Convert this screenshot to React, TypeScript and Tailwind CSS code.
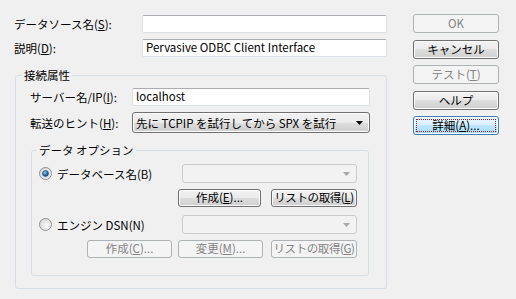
import React from "react";

type Variant = "normal" | "disabled" | "default";

const btnStyles: Record<Variant, string> = {
  normal:
    "border-[#707070] bg-[linear-gradient(#f2f2f2_0%,#ebebeb_50%,#dddddd_50%,#cfcfcf_100%)] shadow-[inset_0_0_0_1px_#fcfcfc] text-black",
  disabled: "border-[#adb2b5] bg-[#f4f4f4] text-[#838383]",
  default:
    "border-[#3c7fb1] bg-[linear-gradient(#eaf6fd_0%,#d9f0fc_50%,#bee6fd_50%,#a7d9f5_100%)] shadow-[inset_0_0_0_1px_#fcfcfc] text-black",
};

function Btn({
  children,
  variant = "normal",
  className = "",
  focused = false,
}: {
  children: React.ReactNode;
  variant?: Variant;
  className?: string;
  focused?: boolean;
}) {
  return (
    <div
      className={`relative flex shrink-0 items-center justify-center whitespace-nowrap rounded-[3px] border leading-none ${btnStyles[variant]} ${className}`}
    >
      {focused && (
        <div className="absolute inset-[2px] border border-dotted border-[#8a2020]" />
      )}
      <span className="relative">{children}</span>
    </div>
  );
}

function TextBox({ value = "", className = "" }: { value?: string; className?: string }) {
  return (
    <div
      className={`flex h-[18px] items-center rounded-[2px] border border-[#dbdfe6] border-t-[#abadb3] bg-white pl-[3px] leading-none ${className}`}
    >
      {value}
    </div>
  );
}

function Arrow({ color }: { color: string }) {
  return (
    <svg width="7" height="4" viewBox="0 0 7 4" className="shrink-0">
      <path d="M0 0H7L3.5 4Z" fill={color} />
    </svg>
  );
}

function DisabledCombo({ className = "" }: { className?: string }) {
  return (
    <div
      className={`flex h-[19px] shrink-0 items-center justify-end rounded-[3px] border border-[#c9cccf] bg-[#f2f2f2] pr-[6px] ${className}`}
    >
      <Arrow color="#a8a8a8" />
    </div>
  );
}

function Radio({ checked }: { checked?: boolean }) {
  return (
    <svg width="13" height="13" viewBox="0 0 13 13" className="shrink-0">
      <defs>
        <radialGradient id="rfill" cx="0.65" cy="0.65" r="0.7">
          <stop offset="0" stopColor="#ffffff" />
          <stop offset="1" stopColor="#d7d7d7" />
        </radialGradient>
        <radialGradient id="rdot" cx="0.4" cy="0.35" r="0.7">
          <stop offset="0" stopColor="#8fd2f5" />
          <stop offset="0.55" stopColor="#2c6fae" />
          <stop offset="1" stopColor="#193f6e" />
        </radialGradient>
      </defs>
      <circle cx="6.5" cy="6.5" r="6" fill="url(#rfill)" stroke="#8e8f8f" />
      <circle cx="6.5" cy="6.5" r="4.2" fill="none" stroke="#e2e2e2" />
      {checked && <circle cx="6.5" cy="6.5" r="3" fill="url(#rdot)" stroke="#1c4a7a" strokeWidth="0.6" />}
    </svg>
  );
}

export default function App() {
  return (
    <div className="flex h-[299px] w-[516px] bg-[#f0f0f0] font-['Noto_Sans_CJK_JP',sans-serif] text-[11.5px] leading-[14px] text-black">
      {/* left side */}
      <div className="flex w-[387px] shrink-0 flex-col pl-[14px] pt-[15px]">
        <div className="flex h-[18px] items-center">
          <span className="w-[128px] shrink-0">
            データソース名(<u>S</u>):
          </span>
          <TextBox className="w-[245px]" />
        </div>
        <div className="mt-[6px] flex h-[18px] items-center">
          <span className="w-[128px] shrink-0">
            説明(<u>D</u>):
          </span>
          <TextBox className="w-[245px]" value="Pervasive ODBC Client Interface" />
        </div>

        <fieldset className="ml-[1px] mt-[11px] h-[221px] w-[372px] rounded-[3px] border border-[#d5dfe5]">
          <legend className="ml-[6px] px-[2px] leading-[14px]">接続属性</legend>
          <div className="flex flex-col pl-[14px] pt-[6px]">
            <div className="flex h-[18px] items-center">
              <span className="w-[102px] shrink-0 whitespace-nowrap">
                サーバー名/IP(<u>I</u>):
              </span>
              <TextBox className="w-[238px]" value="localhost" />
            </div>
            <div className="mt-[6px] flex h-[21px] items-center">
              <span className="w-[102px] shrink-0 whitespace-nowrap">
                転送のヒント(<u>H</u>):
              </span>
              <div className="flex h-[21px] w-[238px] items-center justify-between whitespace-nowrap rounded-[3px] border border-[#707070] bg-[linear-gradient(#f2f2f2_0%,#ebebeb_50%,#dddddd_50%,#cfcfcf_100%)] pl-[3px] pr-[6px] shadow-[inset_0_0_0_1px_#fcfcfc]">
                <span>先に TCPIP を試行してから SPX を試行</span>
                <Arrow color="#000" />
              </div>
            </div>

            <fieldset className="ml-[1px] mt-[10px] h-[133px] w-[338px] rounded-[3px] border border-[#d5dfe5]">
              <legend className="ml-[5px] px-[2px] leading-[14px]">データ オプション</legend>
              <div className="flex flex-col pl-[7px] pt-[7px]">
                <div className="flex h-[19px] items-center">
                  <div className="flex w-[143px] shrink-0 items-center">
                    <Radio checked />
                    <span className="ml-[5px]">データベース名(B)</span>
                  </div>
                  <DisabledCombo className="w-[175px]" />
                </div>
                <div className="ml-[139px] mt-[6px] flex">
                  <Btn className="h-[18px] w-[83px]">
                    作成(<u>E</u>)...
                  </Btn>
                  <Btn className="ml-[10px] h-[18px] w-[86px] tracking-[-0.4px]">
                    リストの取得(<u>L</u>)
                  </Btn>
                </div>
                <div className="mt-[8px] flex h-[19px] items-center">
                  <div className="flex w-[143px] shrink-0 items-center">
                    <Radio />
                    <span className="ml-[5px]">エンジン DSN(N)</span>
                  </div>
                  <DisabledCombo className="w-[175px]" />
                </div>
                <div className="ml-[48px] mt-[6px] flex">
                  <Btn variant="disabled" className="h-[18px] w-[85px]">
                    作成(<u>C</u>)...
                  </Btn>
                  <Btn variant="disabled" className="ml-[6px] h-[18px] w-[85px]">
                    変更(<u>M</u>)...
                  </Btn>
                  <Btn variant="disabled" className="ml-[8px] h-[18px] w-[86px] tracking-[-0.4px]">
                    リストの取得(<u>G</u>)
                  </Btn>
                </div>
              </div>
            </fieldset>
          </div>
        </fieldset>
      </div>

      {/* right buttons */}
      <div className="ml-[26px] flex flex-col pt-[14px]">
        <Btn variant="disabled" className="h-[19px] w-[86px]">
          OK
        </Btn>
        <Btn className="mt-[7px] h-[19px] w-[86px]">キャンセル</Btn>
        <Btn variant="disabled" className="mt-[6px] h-[19px] w-[86px]">
          テスト(<u>T</u>)
        </Btn>
        <Btn className="mt-[7px] h-[19px] w-[86px]">ヘルプ</Btn>
        <Btn variant="default" focused className="mt-[6px] h-[19px] w-[86px]">
          詳細(<u>A</u>)...
        </Btn>
      </div>
    </div>
  );
}
